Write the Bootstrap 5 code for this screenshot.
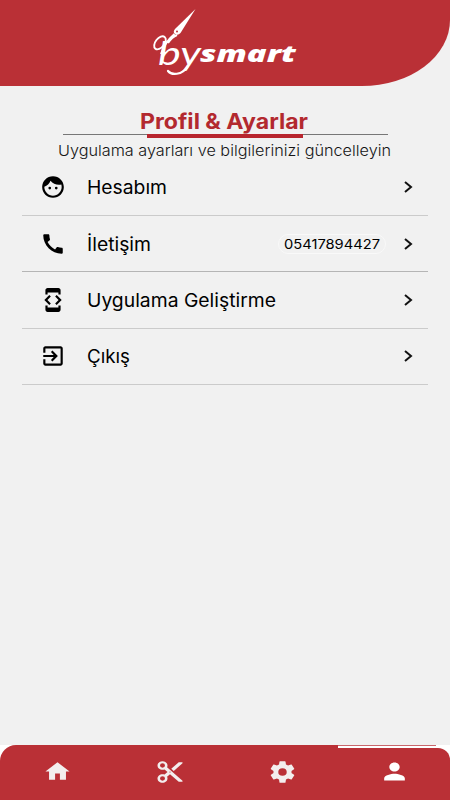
<!DOCTYPE html>
<html lang="tr">
<head>
<meta charset="utf-8">
<meta name="viewport" content="width=device-width, initial-scale=1">
<title>Profil &amp; Ayarlar</title>
<link href="https://cdn.jsdelivr.net/npm/bootstrap@5.3.0/dist/css/bootstrap.min.css" rel="stylesheet">
<style>
body{background:#f1f1f1;font-family:Inter,"Liberation Sans",sans-serif;color:#0b0b0b}
svg{display:block;flex:none}
.top-bar{height:86px;background:#ba3036;border-bottom-right-radius:88px 66px}
.page-head{height:73.500px;padding-top:21px}
.line-rule{width:325px;height:4px;margin-left:63px;border-top:1px solid #777}
.line-rule div{width:156px;height:4px;margin:-1px 0 0 84px;background:#b8252e}
.menu-row{height:56.400px;padding:0 12px 0 18px;border-bottom:1px solid #cbcbcb}
.menu-row.strong-line{border-color:#b5b5b5}
.menu-list{margin:0 22px}
.menu-text{margin-left:21px}
.phone-pill{width:108px;height:20px;border:1px solid #f9f9f9;border-radius:10px;margin-right:17px}
.bottom-bar{height:55px;background:#fff}
.tab{padding-top:14px;padding-left:2px;color:#f3eeee;background:#ba3036}
.tab:first-child{border-top-left-radius:16px}
.tab-current{margin-top:3px;padding-top:10px;color:#fff;border-top-right-radius:12px}
.tab-mark{height:1px;width:98px;left:338px;top:0;background:#c9666b}
</style>
<script src="https://cdn.jsdelivr.net/npm/bootstrap@5.3.0/dist/js/bootstrap.bundle.min.js"></script>
</head>
<body class="vh-100 d-flex flex-column overflow-hidden m-0">
<header class="top-bar d-flex justify-content-center flex-shrink-0">
  <svg width="170" height="86" viewBox="140 0 170 86" fill="#fff">
    <path d="M195.500 9L180.500 33Q178 36 175 34Q172.500 32 175 29Z"/>
    <circle cx="177" cy="31.500" r="1" fill="#ba3036"/>
    <path d="M174.500 34Q165 42 161 54M177 35Q172 37 168 43" fill="none" stroke="#fff" stroke-width="2"/>
    <ellipse cx="160" cy="42.800" rx="4.500" ry="7.500" transform="rotate(38 160 42.800)" fill="none" stroke="#fff" stroke-width="1.900"/>
    <text x="158" y="64.500" font-family="Lato,sans-serif" font-style="italic" font-size="32" textLength="43" lengthAdjust="spacingAndGlyphs">by</text>
    <path d="M188 66C182 76 171 75 168 71" fill="none" stroke="#fff" stroke-width="2.200" stroke-linecap="round"/>
    <text x="200" y="62" font-family="Open Sans,sans-serif" font-style="italic" font-weight="800" font-size="22.500" textLength="96" lengthAdjust="spacingAndGlyphs">smart</text>
  </svg>
</header>
<main class="flex-grow-1">
  <section class="page-head">
    <svg width="450" height="27" viewBox="0 107 450 27" role="heading"><text x="140" y="129" font-size="21.500" font-weight="700" fill="#b3292f" textLength="168" lengthAdjust="spacingAndGlyphs">Profil &amp; Ayarlar</text></svg>
    <div class="line-rule"><div></div></div>
    <svg width="450" height="21" viewBox="0 138 450 21"><text x="58" y="155.500" font-size="15" font-weight="300" fill="#151515" textLength="333" lengthAdjust="spacingAndGlyphs">Uygulama ayarları ve bilgilerinizi güncelleyin</text></svg>
  </section>
  <div class="menu-list">
    <div class="menu-row d-flex align-items-center">
      <svg width="26" height="26" viewBox="0 0 24 24"><path d="M10.250 13a1.250 1.250 0 1 1-2.500 0 1.250 1.250 0 0 1 2.500 0zM15 11.750a1.250 1.250 0 1 0 0 2.500 1.250 1.250 0 0 0 0-2.500zM22 12c0 5.520-4.480 10-10 10S2 17.520 2 12 6.480 2 12 2s10 4.480 10 10zm-2 0c0-.78-.12-1.530-.33-2.240-.7.150-1.420.240-2.170.240-3.130 0-5.920-1.440-7.760-3.690C8.690 8.870 6.600 10.880 4 11.860c.010.040 0 .090 0 .140 0 4.410 3.590 8 8 8s8-3.590 8-8z"/></svg>
      <svg class="menu-text" width="220" height="30"><text x="0" y="22" font-size="18.500" textLength="80" lengthAdjust="spacingAndGlyphs">Hesabım</text></svg>
      <svg class="ms-auto" width="13" height="16" fill="none" stroke="#111" stroke-width="2"><path d="M2 3l6 5L2 13"/></svg>
    </div>
    <div class="menu-row strong-line d-flex align-items-center">
      <svg width="26" height="26" viewBox="0 0 24 24"><path d="M20.010 15.380c-1.230 0-2.420-.2-3.530-.56-.35-.12-.74-.03-1.010.240l-1.570 1.970c-2.830-1.350-5.480-3.900-6.890-6.830l1.950-1.660c.27-.28.350-.67.240-1.020-.37-1.110-.56-2.300-.56-3.530 0-.54-.45-.99-.99-.99H4.190C3.650 3 3 3.240 3 3.990 3 13.280 10.730 21 20.010 21c.71 0 .99-.63.990-1.180v-3.450c0-.54-.45-.99-.99-.99z"/></svg>
      <svg class="menu-text" width="120" height="30"><text x="0" y="22" font-size="18.500" textLength="64" lengthAdjust="spacingAndGlyphs">İletişim</text></svg>
      <div class="phone-pill ms-auto"><svg width="106" height="18"><text x="5" y="13.500" font-size="13" textLength="96" lengthAdjust="spacingAndGlyphs">05417894427</text></svg></div>
      <svg width="13" height="16" fill="none" stroke="#111" stroke-width="2"><path d="M2 3l6 5L2 13"/></svg>
    </div>
    <div class="menu-row d-flex align-items-center">
      <svg width="26" height="26" viewBox="0 0 24 24"><path d="M7 5h10v2h2V3c0-1.100-.9-1.990-2-1.990L7 1c-1.100 0-2 .9-2 2v4h2V5zm8.410 11.590L20 12l-4.590-4.590L14 8.830 17.170 12 14 15.170l1.410 1.420zM10 15.170L6.830 12 10 8.830 8.590 7.410 4 12l4.590 4.590L10 15.170zM17 19H7v-2H5v4c0 1.100.9 2 2 2h10c1.100 0 2-.9 2-2v-4h-2v2z"/></svg>
      <svg class="menu-text" width="220" height="30"><text x="0" y="22" font-size="18.500" textLength="189" lengthAdjust="spacingAndGlyphs">Uygulama Geliştirme</text></svg>
      <svg class="ms-auto" width="13" height="16" fill="none" stroke="#111" stroke-width="2"><path d="M2 3l6 5L2 13"/></svg>
    </div>
    <div class="menu-row d-flex align-items-center">
      <svg width="26" height="26" viewBox="0 0 24 24"><path d="M10.090 15.590L11.500 17l5-5-5-5-1.410 1.410L12.670 11H3v2h9.670l-2.580 2.590zM19 3H5c-1.110 0-2 .9-2 2v4h2V5h14v14H5v-4H3v4c0 1.100.89 2 2 2h14c1.100 0 2-.9 2-2V5c0-1.100-.9-2-2-2z"/></svg>
      <svg class="menu-text" width="220" height="30"><text x="0" y="22" font-size="18.500" textLength="43" lengthAdjust="spacingAndGlyphs">Çıkış</text></svg>
      <svg class="ms-auto" width="13" height="16" fill="none" stroke="#111" stroke-width="2"><path d="M2 3l6 5L2 13"/></svg>
    </div>
  </div>
</main>
<nav class="bottom-bar d-flex position-relative flex-shrink-0">
  <div class="tab col d-flex justify-content-center"><svg width="29" height="25" viewBox="0 0 24 24" preserveAspectRatio="none" fill="currentColor"><path d="M10 20v-6h4v6h5v-8h3L12 3 2 12h3v8z"/></svg></div>
  <div class="tab col d-flex justify-content-center"><svg width="30" height="26" viewBox="0 0 24 24" preserveAspectRatio="none" fill="currentColor"><path d="M9.640 7.640c.23-.5.360-1.050.360-1.640 0-2.210-1.790-4-4-4S2 3.790 2 6s1.790 4 4 4c.59 0 1.140-.13 1.640-.36L10 12l-2.360 2.360C7.140 14.130 6.590 14 6 14c-2.210 0-4 1.790-4 4s1.790 4 4 4 4-1.790 4-4c0-.59-.13-1.140-.36-1.640L12 14l7 7h3v-1L9.640 7.640zM6 8a2 2 0 1 1 0-4 2 2 0 0 1 0 4zm0 12a2 2 0 1 1 0-4 2 2 0 0 1 0 4zm6-7.500a.5.500 0 1 1 0-1 .5.500 0 0 1 0 1zM19 3l-6 6 2 2 7-7V3z"/></svg></div>
  <div class="tab col d-flex justify-content-center"><svg width="29" height="26" viewBox="0 0 24 24" preserveAspectRatio="none" fill="currentColor"><path d="M19.430 12.980c.04-.32.070-.64.070-.98s-.03-.66-.07-.98l2.110-1.650c.19-.15.240-.42.120-.64l-2-3.460c-.12-.22-.39-.3-.61-.22l-2.490 1c-.52-.4-1.080-.73-1.690-.98l-.38-2.650C14.460 2.180 14.250 2 14 2h-4c-.25 0-.46.180-.49.420l-.38 2.650c-.61.250-1.170.590-1.690.980l-2.490-1c-.23-.09-.49 0-.61.220l-2 3.460c-.13.220-.07.490.120.640l2.110 1.650c-.04.320-.07.650-.07.980s.03.660.070.980l-2.110 1.650c-.19.150-.24.420-.12.640l2 3.460c.12.220.390.300.610.220l2.490-1c.52.400 1.080.730 1.690.980l.38 2.650c.03.240.240.420.490.420h4c.25 0 .46-.18.490-.42l.38-2.650c.61-.25 1.170-.59 1.690-.98l2.490 1c.23.090.490 0 .61-.22l2-3.460c.12-.22.070-.49-.12-.64l-2.110-1.650zM12 15.500a3.500 3.500 0 1 1 0-7 3.500 3.500 0 0 1 0 7z"/></svg></div>
  <div class="tab tab-current col d-flex justify-content-center"><svg width="31" height="27" viewBox="0 0 24 24" preserveAspectRatio="none" fill="currentColor"><path d="M12 12c2.210 0 4-1.790 4-4s-1.790-4-4-4-4 1.790-4 4 1.790 4 4 4zm0 2c-2.670 0-8 1.340-8 4v2h16v-2c0-2.660-5.330-4-8-4z"/></svg></div>
  <div class="tab-mark position-absolute"></div>
</nav>
</body>
</html>
